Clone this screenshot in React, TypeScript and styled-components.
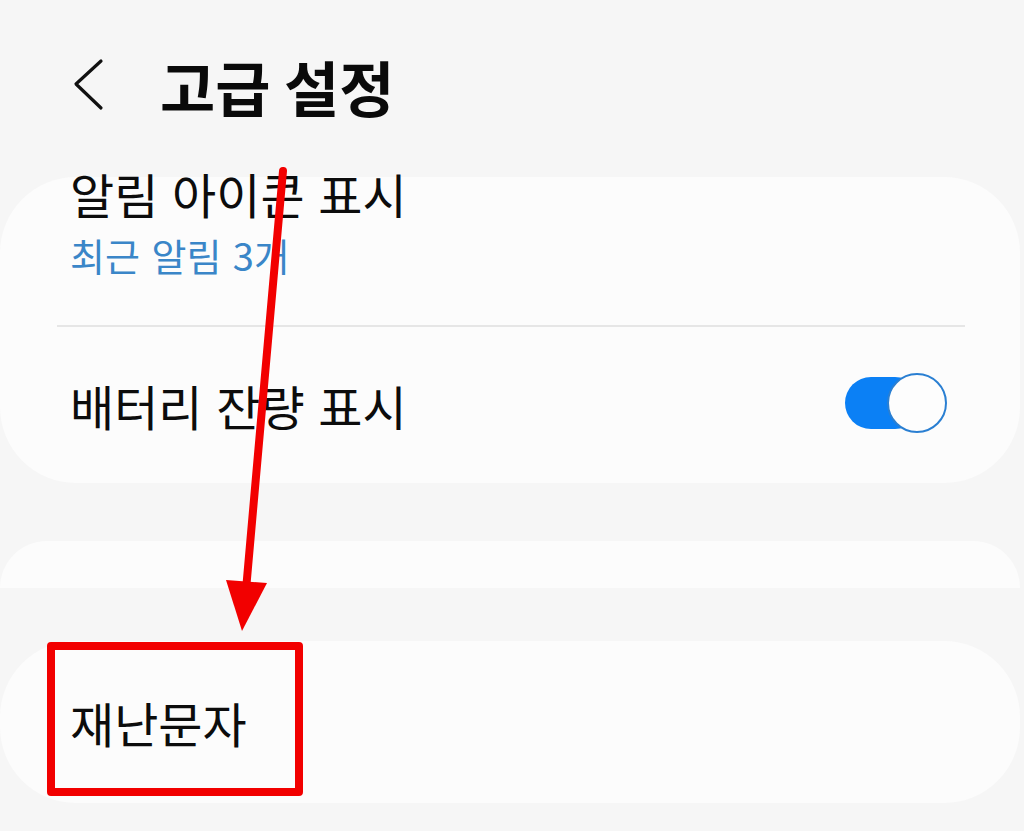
import React from 'react';
import styled, { createGlobalStyle } from 'styled-components';

const GlobalStyle = createGlobalStyle`
  html, body {
    margin: 0;
    padding: 0;
    background: #f6f6f6;
    overflow: hidden;
  }
  body {
    font-family: "Noto Sans CJK KR", "Noto Sans", sans-serif;
    color: #111;
  }
`;

const Screen = styled.div`
  position: relative;
  width: 1024px;
  height: 831px;
  background: #f6f6f6;
  overflow: hidden;
`;

const Header = styled.header`
  height: 177px;
  display: flex;
  align-items: center;
  padding-left: 72px;
  box-sizing: border-box;
`;

const BackButton = styled.div`
  width: 34px;
  height: 54px;
  margin-right: 54px;
  margin-top: -8px;
  display: flex;
  align-items: center;
`;

const Title = styled.h1`
  margin: -6px 0 0 0;
  font-size: 60px;
  font-weight: 700;
  line-height: 1;
  color: #0a0a0a;
`;

const Card = styled.section<{ $peek?: boolean; $height?: number }>`
  display: flex;
  flex-direction: column;
  background: #fcfcfc;
  width: 1020px;
  border-radius: ${p => (p.$peek ? '72px 72px 0 0' : '76px')};
  ${p => (p.$height ? `height: ${p.$height}px;` : '')}
  box-sizing: border-box;
`;

const Row = styled.div<{ $height: number; $top?: boolean }>`
  display: flex;
  align-items: ${p => (p.$top ? 'flex-start' : 'center')};
  justify-content: space-between;
  height: ${p => p.$height}px;
  padding: 0 73px 0 70px;
  box-sizing: border-box;
`;

const TextBlock = styled.div`
  display: flex;
  flex-direction: column;
  margin-top: -11px;
`;

const Label = styled.div`
  font-size: 48px;
  line-height: 54px;
  color: #0c0c0c;
  word-spacing: 3px;
`;

const Sub = styled.div`
  font-size: 38px;
  line-height: 50px;
  color: #3a86c8;
  margin-top: 10px;
  word-spacing: 3px;
`;

const Divider = styled.div`
  height: 2px;
  background: #e6e6e6;
  margin: 0 55px 0 57px;
`;

const Switch = styled.div`
  position: relative;
  width: 102px;
  height: 60px;
  display: flex;
  align-items: center;
  margin-top: -4px;
`;

const Track = styled.div`
  width: 76px;
  height: 52px;
  border-radius: 26px;
  background: #0b80f5;
`;

const Knob = styled.div`
  position: absolute;
  right: 0;
  top: 0;
  width: 56px;
  height: 56px;
  border-radius: 50%;
  background: #fdfdfd;
  border: 2px solid #2a7fd2;
`;

const Gap = styled.div<{ $h: number }>`
  height: ${p => p.$h}px;
`;

const Annotation = styled.svg`
  position: absolute;
  left: 0;
  top: 0;
  pointer-events: none;
`;

const HighlightBox = styled.div`
  position: absolute;
  left: 47px;
  top: 642px;
  width: 256px;
  height: 154px;
  border: 8px solid #f20000;
  border-radius: 4px;
  box-sizing: border-box;
`;

export default function App() {
  return (
    <Screen>
      <GlobalStyle />
      <Header>
        <BackButton>
          <svg width="34" height="54" viewBox="0 0 34 54">
            <path d="M29 3 L4 26 L29 50" fill="none" stroke="#111" strokeWidth="3.2" strokeLinecap="round" strokeLinejoin="round" />
          </svg>
        </BackButton>
        <Title>고급 설정</Title>
      </Header>

      <Card>
        <Row $height={148} $top>
          <TextBlock>
            <Label>알림 아이콘 표시</Label>
            <Sub>최근 알림 3개</Sub>
          </TextBlock>
        </Row>
        <Divider />
        <Row $height={156}>
          <Label>배터리 잔량 표시</Label>
          <Switch>
            <Track />
            <Knob />
          </Switch>
        </Row>
      </Card>

      <Gap $h={58} />
      <Card $peek $height={47} />
      <Gap $h={53} />

      <Card $height={162}>
        <Row $height={162}>
          <Label>재난문자</Label>
        </Row>
      </Card>

      <HighlightBox />
      <Annotation width="1024" height="831" viewBox="0 0 1024 831">
        <line x1="283" y1="171" x2="246" y2="590" stroke="#f20000" strokeWidth="8" strokeLinecap="round" />
        <polygon points="226,580 267,583 242,631" fill="#f20000" />
      </Annotation>
    </Screen>
  );
}
